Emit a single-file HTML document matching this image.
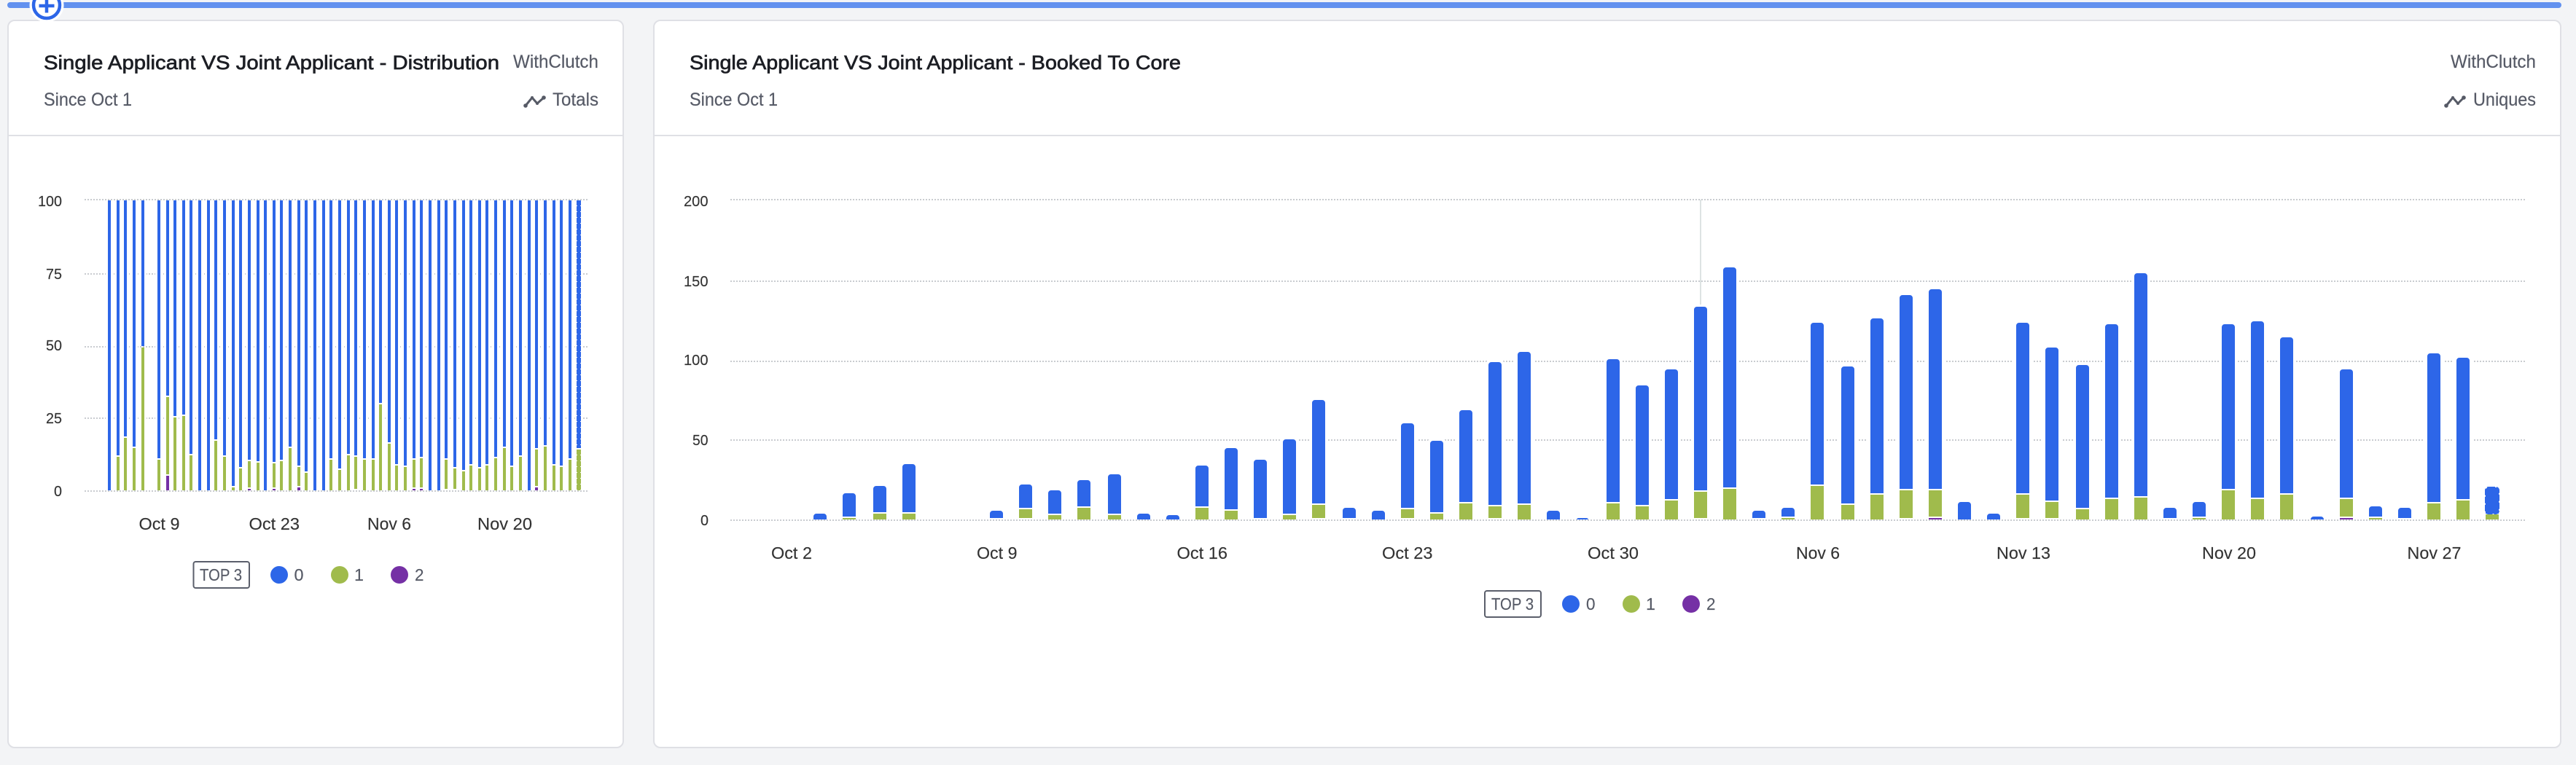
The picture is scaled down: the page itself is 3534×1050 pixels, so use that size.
<!DOCTYPE html>
<html lang="en">
<head>
<meta charset="utf-8">
<title>Single Applicant VS Joint Applicant</title>
<style>
html,body{margin:0;padding:0;background:#f3f4f6;width:3534px;height:1050px;overflow:hidden}
svg{display:block}
text{font-family:"Liberation Sans",sans-serif}
.t{font-size:27px;fill:#1c1e24;stroke:#1c1e24;stroke-width:.7}
.s{font-size:25px;fill:#565a66;stroke:#565a66;stroke-width:.2}
.a{font-size:20px;fill:#333;stroke:#333;stroke-width:.15}
.x{font-size:23.5px;fill:#333;stroke:#333;stroke-width:.15}
.l{font-size:23px;fill:#565a66;stroke:#565a66;stroke-width:.15}
.grid{stroke:#c9ccd0;stroke-width:2;stroke-dasharray:2 2;fill:none}
</style>
</head>
<body>
<svg xmlns="http://www.w3.org/2000/svg" width="3534" height="1050" viewBox="0 0 3534 1050">
<defs>
<path id="b1" d="M150 275V673M162 275V625M172 275V599M184 275V613M196 275V475M218 275V629M230 275V543M240 275V571M252 275V569M262 275V623M274 275V673M286 275V673M296 275V603M308 275V625M320 275V667M330 275V641M342 275V631M354 275V633M364 275V673M376 275V634M386 275V631M398 275V613M410 275V639M420 275V647M432 275V673M444 275V673M454 275V629M466 275V643M478 275V623M488 275V625M500 275V629M512 275V629M522 275V553M534 275V607M544 275V637M556 275V639M568 275V629M578 275V627M590 275V673M602 275V673M612 275V629M624 275V641M636 275V645M646 275V637M658 275V641M668 275V637M680 275V627M692 275V613M702 275V639M714 275V625M726 275V673M736 275V615M748 275V611M760 275V637M770 275V639M782 275V629M794 275V615"/>
<path id="g1" d="M162 627V673M172 601V673M184 615V673M196 477V673M218 631V673M230 545V651M240 573V673M252 571V673M262 625V673M296 605V673M308 627V673M320 669V673M330 643V673M342 633V669M354 635V673M376 636V669M386 633V673M398 615V673M410 641V667M420 649V673M454 631V673M466 645V673M478 625V673M488 627V671M500 631V673M512 631V673M522 555V673M534 609V673M544 639V673M556 641V673M568 631V669M578 629V669M612 631V671M624 643V671M636 647V673M646 639V673M658 643V673M668 639V673M680 629V673M692 615V673M702 641V673M714 627V673M736 617V667M748 613V673M760 639V673M770 641V673M782 631V673M794 617V673"/>
<path id="b2" d="M1116 709a4 4 0 0 1 4-4h10a4 4 0 0 1 4 4V713H1116zM1156 681a4 4 0 0 1 4-4h10a4 4 0 0 1 4 4V709H1156zM1198 671a4 4 0 0 1 4-4h10a4 4 0 0 1 4 4V703H1198zM1238 641a4 4 0 0 1 4-4h10a4 4 0 0 1 4 4V703H1238zM1358 705a4 4 0 0 1 4-4h10a4 4 0 0 1 4 4V711H1358zM1398 669a4 4 0 0 1 4-4h10a4 4 0 0 1 4 4V697H1398zM1438 677a4 4 0 0 1 4-4h10a4 4 0 0 1 4 4V705H1438zM1478 663a4 4 0 0 1 4-4h10a4 4 0 0 1 4 4V695H1478zM1520 655a4 4 0 0 1 4-4h10a4 4 0 0 1 4 4V705H1520zM1560 709a4 4 0 0 1 4-4h10a4 4 0 0 1 4 4V713H1560zM1600 711a4 4 0 0 1 4-4h10a4 4 0 0 1 4 4V713H1600zM1640 643a4 4 0 0 1 4-4h10a4 4 0 0 1 4 4V695H1640zM1680 619a4 4 0 0 1 4-4h10a4 4 0 0 1 4 4V699H1680zM1720 635a4 4 0 0 1 4-4h10a4 4 0 0 1 4 4V711H1720zM1760 607a4 4 0 0 1 4-4h10a4 4 0 0 1 4 4V705H1760zM1800 553a4 4 0 0 1 4-4h10a4 4 0 0 1 4 4V691H1800zM1842 701a4 4 0 0 1 4-4h10a4 4 0 0 1 4 4V711H1842zM1882 705a4 4 0 0 1 4-4h10a4 4 0 0 1 4 4V713H1882zM1922 585a4 4 0 0 1 4-4h10a4 4 0 0 1 4 4V697H1922zM1962 609a4 4 0 0 1 4-4h10a4 4 0 0 1 4 4V703H1962zM2002 567a4 4 0 0 1 4-4h10a4 4 0 0 1 4 4V689H2002zM2042 501a4 4 0 0 1 4-4h10a4 4 0 0 1 4 4V693H2042zM2082 487a4 4 0 0 1 4-4h10a4 4 0 0 1 4 4V691H2082zM2122 705a4 4 0 0 1 4-4h10a4 4 0 0 1 4 4V713H2122zM2163 713a3 2 0 0 1 3-2h10a3 2 0 0 1 3 2zM2204 497a4 4 0 0 1 4-4h10a4 4 0 0 1 4 4V689H2204zM2244 533a4 4 0 0 1 4-4h10a4 4 0 0 1 4 4V693H2244zM2284 511a4 4 0 0 1 4-4h10a4 4 0 0 1 4 4V685H2284zM2324 425a4 4 0 0 1 4-4h10a4 4 0 0 1 4 4V673H2324zM2364 371a4 4 0 0 1 4-4h10a4 4 0 0 1 4 4V669H2364zM2404 705a4 4 0 0 1 4-4h10a4 4 0 0 1 4 4V711H2404zM2444 701a4 4 0 0 1 4-4h10a4 4 0 0 1 4 4V709H2444zM2484 447a4 4 0 0 1 4-4h10a4 4 0 0 1 4 4V665H2484zM2526 507a4 4 0 0 1 4-4h10a4 4 0 0 1 4 4V691H2526zM2566 441a4 4 0 0 1 4-4h10a4 4 0 0 1 4 4V677H2566zM2606 409a4 4 0 0 1 4-4h10a4 4 0 0 1 4 4V671H2606zM2646 401a4 4 0 0 1 4-4h10a4 4 0 0 1 4 4V671H2646zM2686 693a4 4 0 0 1 4-4h10a4 4 0 0 1 4 4V713H2686zM2726 709a4 4 0 0 1 4-4h10a4 4 0 0 1 4 4V713H2726zM2766 447a4 4 0 0 1 4-4h10a4 4 0 0 1 4 4V677H2766zM2806 481a4 4 0 0 1 4-4h10a4 4 0 0 1 4 4V687H2806zM2848 505a4 4 0 0 1 4-4h10a4 4 0 0 1 4 4V697H2848zM2888 449a4 4 0 0 1 4-4h10a4 4 0 0 1 4 4V683H2888zM2928 379a4 4 0 0 1 4-4h10a4 4 0 0 1 4 4V681H2928zM2968 701a4 4 0 0 1 4-4h10a4 4 0 0 1 4 4V711H2968zM3008 693a4 4 0 0 1 4-4h10a4 4 0 0 1 4 4V709H3008zM3048 449a4 4 0 0 1 4-4h10a4 4 0 0 1 4 4V671H3048zM3088 445a4 4 0 0 1 4-4h10a4 4 0 0 1 4 4V683H3088zM3128 467a4 4 0 0 1 4-4h10a4 4 0 0 1 4 4V677H3128zM3170 713a4 4 0 0 1 4-4h10a4 4 0 0 1 4 4zM3210 511a4 4 0 0 1 4-4h10a4 4 0 0 1 4 4V683H3210zM3250 699a4 4 0 0 1 4-4h10a4 4 0 0 1 4 4V709H3250zM3290 701a4 4 0 0 1 4-4h10a4 4 0 0 1 4 4V711H3290zM3330 489a4 4 0 0 1 4-4h10a4 4 0 0 1 4 4V689H3330zM3370 495a4 4 0 0 1 4-4h10a4 4 0 0 1 4 4V685H3370zM3410 673a4 4 0 0 1 4-4h10a4 4 0 0 1 4 4V705H3410z"/>
<path id="g2" d="M1165 711V713M1207 705V713M1247 705V713M1407 699V711M1447 707V713M1487 697V713M1529 707V713M1649 697V713M1689 701V713M1769 707V713M1809 693V711M1931 699V711M1971 705V713M2011 691V713M2051 695V711M2091 693V713M2213 691V713M2253 695V713M2293 687V713M2333 675V711M2373 671V713M2453 711V713M2493 667V713M2535 693V713M2575 679V713M2615 673V711M2655 673V709M2775 679V711M2815 689V711M2857 699V713M2897 685V713M2937 683V713M3017 711V713M3057 673V713M3097 685V713M3137 679V713M3219 685V709M3259 711V713M3339 691V713M3379 687V713M3419 706V713"/>
</defs>

<!-- top bar -->
<rect x="10" y="3" width="3504" height="8" rx="4" fill="#6291ef"/>

<!-- card 1 -->
<rect x="11" y="28" width="844" height="998" rx="9" fill="#fff" stroke="#dfe0e5" stroke-width="2"/>
<rect x="12" y="185" width="842" height="2" fill="#dfe0e5"/>
<text class="t" x="60" y="95" textLength="625" lengthAdjust="spacingAndGlyphs">Single Applicant VS Joint Applicant - Distribution</text>
<text class="s" x="704" y="93" textLength="117" lengthAdjust="spacingAndGlyphs">WithClutch</text>
<text class="s" x="60" y="145" textLength="121" lengthAdjust="spacingAndGlyphs">Since Oct 1</text>
<text class="s" x="758" y="145" textLength="63" lengthAdjust="spacingAndGlyphs">Totals</text>
<g fill="none" stroke="#565a66" stroke-width="3" stroke-linejoin="round">
<path d="M721 145L730 134L737 142L746 134"/></g>
<g fill="#565a66"><circle cx="721" cy="145" r="2.8"/><circle cx="746" cy="134" r="2.8"/><circle cx="730" cy="134" r="2"/><circle cx="737" cy="142" r="2"/></g>

<!-- card 2 -->
<rect x="897" y="28" width="2616" height="998" rx="9" fill="#fff" stroke="#dfe0e5" stroke-width="2"/>
<rect x="898" y="185" width="2614" height="2" fill="#dfe0e5"/>
<text class="t" x="946" y="95" textLength="674" lengthAdjust="spacingAndGlyphs">Single Applicant VS Joint Applicant - Booked To Core</text>
<text class="s" x="946" y="145" textLength="121" lengthAdjust="spacingAndGlyphs">Since Oct 1</text>
<text class="s" x="3362" y="93" textLength="117" lengthAdjust="spacingAndGlyphs">WithClutch</text>
<text class="s" x="3393" y="145" textLength="86" lengthAdjust="spacingAndGlyphs">Uniques</text>
<g fill="none" stroke="#565a66" stroke-width="3" stroke-linejoin="round">
<path d="M3356 145L3365 134L3372 142L3380 134"/></g>
<g fill="#565a66"><circle cx="3356" cy="145" r="2.8"/><circle cx="3380" cy="134" r="2.8"/><circle cx="3365" cy="134" r="2"/><circle cx="3372" cy="142" r="2"/></g>

<!-- plus button -->
<circle cx="64" cy="7" r="23.5" fill="#fff"/>
<circle cx="64" cy="7" r="18" fill="#fff" stroke="#2d66e8" stroke-width="4.5"/>
<path d="M53.500 8H74.500M64 -3V17.500" stroke="#2d66e8" stroke-width="4.500" fill="none"/>

<!-- chart 1 grid -->
<path class="grid" d="M116 376H806M116 476H806M116 574H806"/>
<g fill="none" stroke="#fff" stroke-width="10"><use href="#b1"/><use href="#g1"/></g>
<path class="grid" d="M116 274H806M116 674H806"/>
<g fill="none" stroke="#2d66e8" stroke-width="4"><use href="#b1"/></g>
<g fill="none" stroke="#a0bb4c" stroke-width="4"><use href="#g1"/></g>
<path d="M228 653H232V673H228zM340 671H344V673H340zM374 671H378V673H374zM408 669H412V673H408zM566 671H570V673H566zM576 671H580V673H576zM734 669H738V673H734z" fill="#7530a5"/>
<path d="M792 275V615M796 275V615" stroke="#2d66e8" stroke-width="2" stroke-dasharray="7 1" fill="none"/>
<path d="M792 617V673M796 617V673" stroke="#a0bb4c" stroke-width="2" stroke-dasharray="7 1" fill="none"/>

<text class="a" x="52" y="283" textLength="33" lengthAdjust="spacingAndGlyphs">100</text>
<text class="a" x="63" y="383" textLength="22" lengthAdjust="spacingAndGlyphs">75</text>
<text class="a" x="63" y="481" textLength="22" lengthAdjust="spacingAndGlyphs">50</text>
<text class="a" x="63" y="581" textLength="22" lengthAdjust="spacingAndGlyphs">25</text>
<text class="a" x="74" y="681" textLength="11" lengthAdjust="spacingAndGlyphs">0</text>
<text class="x" x="190.500" y="727" textLength="56" lengthAdjust="spacingAndGlyphs">Oct 9</text>
<text class="x" x="341.500" y="727" textLength="69.500" lengthAdjust="spacingAndGlyphs">Oct 23</text>
<text class="x" x="504" y="727" textLength="60" lengthAdjust="spacingAndGlyphs">Nov 6</text>
<text class="x" x="655" y="727" textLength="75" lengthAdjust="spacingAndGlyphs">Nov 20</text>

<!-- legend 1 -->
<rect x="265.500" y="771" width="76.500" height="36" rx="3" fill="#fff" stroke="#5b5f6b" stroke-width="2"/>
<text class="l" x="274" y="797" textLength="58" lengthAdjust="spacingAndGlyphs">TOP 3</text>
<circle cx="383" cy="789" r="12" fill="#2d66e8"/>
<text class="l" x="403.500" y="797" textLength="13" lengthAdjust="spacingAndGlyphs">0</text>
<circle cx="466" cy="789" r="12" fill="#a0bb4c"/>
<text class="l" x="486" y="797" textLength="13" lengthAdjust="spacingAndGlyphs">1</text>
<circle cx="548" cy="789" r="12" fill="#7530a5"/>
<text class="l" x="569" y="797" textLength="12.500" lengthAdjust="spacingAndGlyphs">2</text>

<!-- chart 2 grid -->
<path class="grid" d="M1002 386H3464M1002 496H3464M1002 604H3464"/>
<path d="M2333 274V419" stroke="#dde3e3" stroke-width="2" fill="none"/>
<g fill="#fff" stroke="#fff" stroke-width="8"><use href="#b2"/></g>
<g fill="none" stroke="#fff" stroke-width="26"><use href="#g2"/></g>
<path class="grid" d="M1002 274H3464M1002 714H3464"/>
<path d="M2333 274V418" stroke="#dde3e3" stroke-width="2" fill="none"/>
<g fill="#2d66e8"><use href="#b2"/></g>
<g fill="none" stroke="#a0bb4c" stroke-width="18"><use href="#g2"/></g>
<path d="M2646 711H2664V713H2646zM3210 711H3228V713H3210z" fill="#7530a5"/>
<rect x="3410" y="669" width="18" height="36" rx="4" fill="none" stroke="#2d66e8" stroke-width="2" stroke-dasharray="9 2"/>

<text class="a" x="938" y="283" textLength="33.500" lengthAdjust="spacingAndGlyphs">200</text>
<text class="a" x="938" y="393" textLength="33.500" lengthAdjust="spacingAndGlyphs">150</text>
<text class="a" x="938" y="501" textLength="33.500" lengthAdjust="spacingAndGlyphs">100</text>
<text class="a" x="950" y="611" textLength="21.500" lengthAdjust="spacingAndGlyphs">50</text>
<text class="a" x="961" y="721" textLength="11" lengthAdjust="spacingAndGlyphs">0</text>
<text class="x" x="1058" y="767" textLength="56" lengthAdjust="spacingAndGlyphs">Oct 2</text>
<text class="x" x="1340" y="767" textLength="55.500" lengthAdjust="spacingAndGlyphs">Oct 9</text>
<text class="x" x="1614.500" y="767" textLength="69.500" lengthAdjust="spacingAndGlyphs">Oct 16</text>
<text class="x" x="1896" y="767" textLength="69.500" lengthAdjust="spacingAndGlyphs">Oct 23</text>
<text class="x" x="2178" y="767" textLength="70" lengthAdjust="spacingAndGlyphs">Oct 30</text>
<text class="x" x="2464" y="767" textLength="60" lengthAdjust="spacingAndGlyphs">Nov 6</text>
<text class="x" x="2739" y="767" textLength="74" lengthAdjust="spacingAndGlyphs">Nov 13</text>
<text class="x" x="3021" y="767" textLength="74" lengthAdjust="spacingAndGlyphs">Nov 20</text>
<text class="x" x="3302.500" y="767" textLength="74" lengthAdjust="spacingAndGlyphs">Nov 27</text>

<!-- legend 2 -->
<rect x="2037" y="811" width="77" height="36" rx="3" fill="#fff" stroke="#5b5f6b" stroke-width="2"/>
<text class="l" x="2046" y="837" textLength="58" lengthAdjust="spacingAndGlyphs">TOP 3</text>
<circle cx="2155" cy="829" r="12" fill="#2d66e8"/>
<text class="l" x="2176" y="837" textLength="12.500" lengthAdjust="spacingAndGlyphs">0</text>
<circle cx="2238" cy="829" r="12" fill="#a0bb4c"/>
<text class="l" x="2258" y="837" textLength="13" lengthAdjust="spacingAndGlyphs">1</text>
<circle cx="2320" cy="829" r="12" fill="#7530a5"/>
<text class="l" x="2341" y="837" textLength="12.500" lengthAdjust="spacingAndGlyphs">2</text>
</svg>
</body>
</html>
